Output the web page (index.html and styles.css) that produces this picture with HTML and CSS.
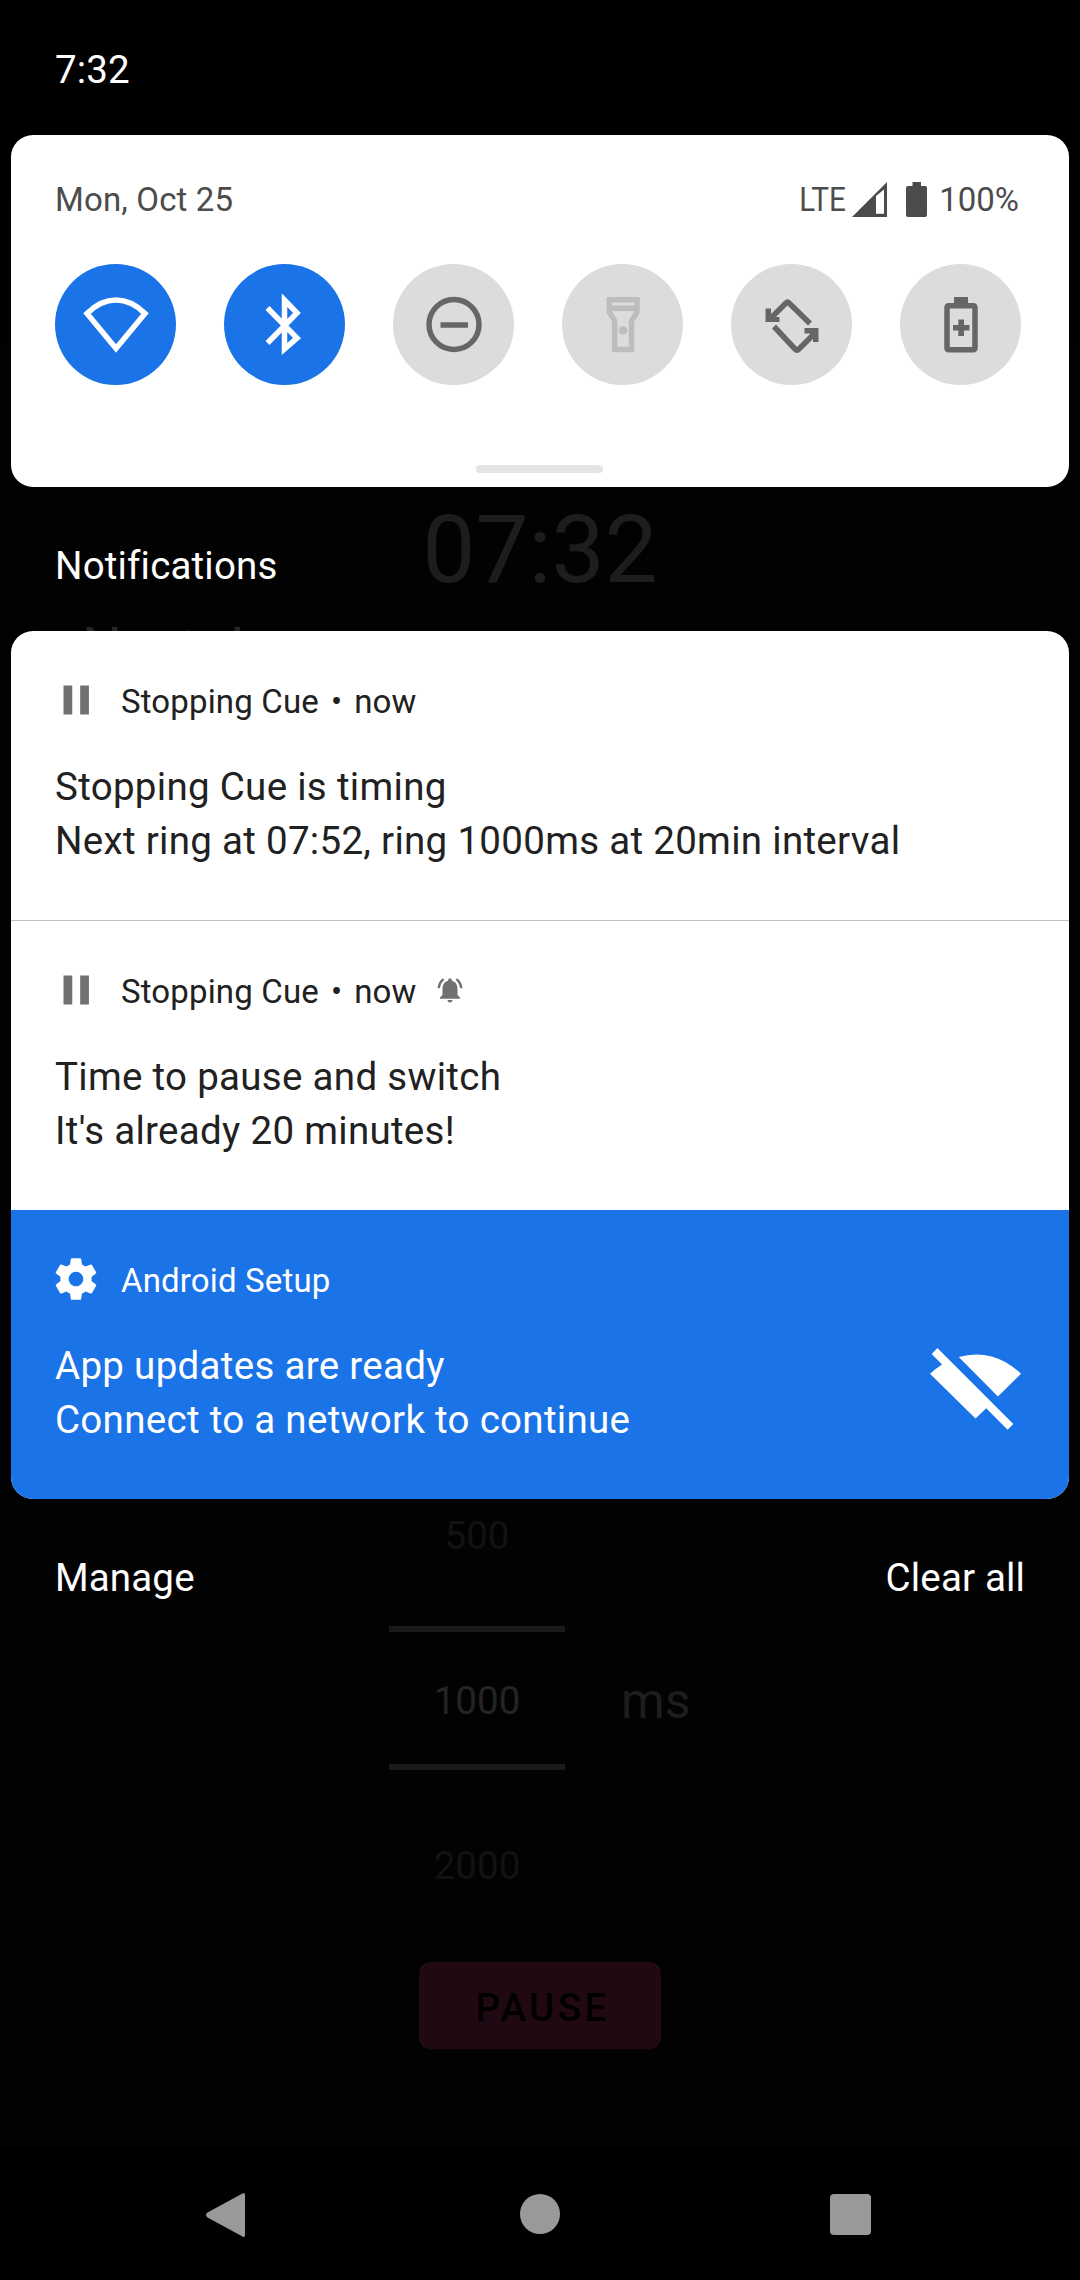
FILE: index.html
```html
<!DOCTYPE html>
<html lang="en">
<head>
<meta charset="utf-8">
<title>Notification shade</title>
<link rel="stylesheet" href="styles.css">
</head>
<body>
<div class="screen">
  <div class="app" aria-hidden="true">
    <div class="app-clock">07:32</div>
    <div class="app-next">Next ring</div>
    <div class="picker-row">
      <div class="picker">
        <span class="picker-near">500</span>
        <span class="picker-value">1000</span>
        <span class="picker-near picker-after">2000</span>
      </div>
      <span class="picker-unit">ms</span>
    </div>
    <div class="app-button">PAUSE</div>
  </div>

  <div class="shade">
    <header class="status-bar">7:32</header>

    <section class="quick">
      <div class="quick-head">
        <span class="date">Mon, Oct 25</span>
        <span class="lte">LTE</span>
        <svg class="signal" viewBox="0 0 35 35"><path fill-rule="evenodd" d="M35 0V35H0ZM24 14V31.800H32V7.500Z"/></svg>
        <svg class="battery" viewBox="0 0 21 35"><path d="M6.500 0H15V4H19Q21 4 21 6V33Q21 35 19 35H2Q0 35 0 33V6Q0 4 2 4H6.500Z"/></svg>
        <span class="percent">100%</span>
      </div>
      <div class="tiles">
        <div class="tile on"><svg viewBox="0 0 121 121"><path class="line" d="M32 49.500Q45.500 36 61 36T90 49.500L61 84.500Z"/></svg></div>
        <div class="tile on"><svg viewBox="0 0 121 121"><path class="line" d="M43.500 44L73 74 60.500 85V36L73 49 43.500 79"/></svg></div>
        <div class="tile"><svg viewBox="0 0 121 121"><circle class="line" cx="61" cy="60.500" r="25"/><path class="line" d="M47.500 61H75"/></svg></div>
        <div class="tile off"><svg viewBox="0 0 121 121"><path class="line" d="M47.300 35.700H75V48L69.500 57V85.500H52.700V57L47.300 48ZM47 44.300H75"/><circle cx="61" cy="66.500" r="4.300"/></svg></div>
        <div class="tile"><svg viewBox="0 0 121 121"><path class="line" d="M39 55L55 39Q56.500 37.500 58 39L79 59.500M43 62.500L64 85Q66 87 68 85L84 69"/><path d="M34.500 44.500H40V50L43 53H48.500V58H34.500ZM73.500 64H87.500V78H82V72.500L78.500 69.500H73.500Z"/></svg></div>
        <div class="tile"><svg viewBox="0 0 121 121"><rect class="line" x="47" y="41.700" width="28" height="44" rx="1.500"/><path d="M54 33H68V41H54ZM58.300 55.500H64V61H69.500V66.500H64V72H58.300V66.500H53V61H58.300Z"/></svg></div>
      </div>
      <div class="handle"></div>
    </section>

    <h1 class="shade-title">Notifications</h1>

    <main class="list">
      <article class="note">
        <div class="note-head">
          <svg class="note-icon" viewBox="0 0 24 24"><path d="M6 5h4.200v14H6zM14 5h4.200v14H14z"/></svg>
          <span>Stopping Cue</span><span class="dot">•</span><span>now</span>
        </div>
        <p>Stopping Cue is timing</p>
        <p>Next ring at 07:52, ring 1000ms at 20min interval</p>
      </article>
      <article class="note">
        <div class="note-head">
          <svg class="note-icon" viewBox="0 0 24 24"><path d="M6 5h4.200v14H6zM14 5h4.200v14H14z"/></svg>
          <span>Stopping Cue</span><span class="dot">•</span><span>now</span>
          <svg class="bell" viewBox="0 0 24 24"><path d="M7.580 4.080L6.150 2.650C3.750 4.480 2.170 7.300 2.030 10.500h2c.150-2.650 1.510-4.970 3.550-6.420zm12.390 6.420h2c-.150-3.200-1.730-6.020-4.120-7.850l-1.420 1.430c2.020 1.450 3.390 3.770 3.540 6.420zM18 11c0-3.070-1.640-5.640-4.500-6.320V4c0-.830-.670-1.500-1.500-1.500s-1.500.670-1.500 1.500v.680C7.630 5.360 6 7.920 6 11v5l-2 2v1h16v-1l-2-2v-5zm-6 11c.140 0 .270-.010.400-.040.650-.140 1.180-.580 1.440-1.180.100-.240.150-.500.150-.780h-4c.010 1.100.900 2 2.010 2z"/></svg>
        </div>
        <p>Time to pause and switch</p>
        <p>It's already 20 minutes!</p>
      </article>
      <article class="note setup">
        <div class="note-head">
          <svg class="note-icon" viewBox="0 0 24 24"><path d="M19.430 12.980c.040-.320.070-.640.070-.980s-.030-.660-.070-.980l2.110-1.650c.190-.150.240-.420.120-.640l-2-3.460c-.120-.220-.390-.300-.610-.220l-2.490 1c-.520-.400-1.080-.730-1.690-.980l-.380-2.650C14.460 2.180 14.250 2 14 2h-4c-.250 0-.460.180-.490.420l-.380 2.650c-.610.250-1.170.590-1.690.980l-2.490-1c-.230-.090-.490 0-.610.220l-2 3.460c-.130.220-.070.490.120.640l2.110 1.650c-.040.320-.070.650-.070.980s.030.660.070.980l-2.110 1.650c-.190.150-.240.420-.120.640l2 3.460c.120.220.390.300.610.220l2.490-1c.520.400 1.080.730 1.690.980l.380 2.650c.030.240.240.420.490.420h4c.250 0 .460-.180.490-.420l.380-2.650c.610-.250 1.170-.590 1.690-.980l2.490 1c.230.090.490 0 .610-.220l2-3.460c.120-.220.070-.490-.120-.640l-2.110-1.650zM12 15.500c-1.930 0-3.500-1.570-3.500-3.500s1.570-3.500 3.500-3.500 3.500 1.570 3.500 3.500-1.570 3.500-3.500 3.500z"/></svg>
          <span>Android Setup</span>
        </div>
        <div class="setup-body">
          <div>
            <p>App updates are ready</p>
            <p>Connect to a network to continue</p>
          </div>
          <svg class="wifi-off" viewBox="211 206 272 245"><path d="M216 224L233 206 460 433 443 450 379 386 347 417 211 283Q228 267 247 255ZM297 233Q345 219 395 231 445 245 483 283L414 351Z"/></svg>
        </div>
      </article>
    </main>

    <div class="actions"><span>Manage</span><span>Clear all</span></div>

    <nav class="nav">
      <svg viewBox="0 0 60 60"><path d="M42.500 8.500Q45 7 45 10V50Q45 53 42.500 51.500L7.500 32.500Q4.500 30 7.500 27.500Z"/></svg>
      <svg viewBox="0 0 60 60"><circle cx="30" cy="29" r="20"/></svg>
      <svg viewBox="0 0 60 60"><rect x="10" y="9" width="41" height="41" rx="4"/></svg>
    </nav>
  </div>
</div>
</body>
</html>
```

FILE: styles.css
```css
* { box-sizing: border-box; margin: 0; padding: 0; }

body {
  background: #000;
  font-family: Roboto, "Noto Sans", sans-serif;
  font-size: 38.5px;
  font-weight: 400;
}

svg { display: block; flex: none; }

.screen {
  position: relative;
  width: 1080px;
  height: 2280px;
  overflow: hidden;
  background: linear-gradient(#000 0, #000 135px, #020202 560px);
}

/* Dimmed app behind the shade */
.app {
  position: absolute;
  inset: 0;
  display: flex;
  flex-direction: column;
  align-items: center;
  padding-top: 495px;
  color: #1d1d1d;
}
.app-clock { font-size: 94.6px; line-height: 110px; }
.app-next { align-self: flex-start; margin: 11px 0 0 82px; font-size: 56px; line-height: 64px; color: #262626; }
.picker-row {
  display: flex;
  align-self: flex-start;
  align-items: center;
  gap: 56px;
  margin: 784px 0 0 389px;
}
.picker { display: flex; flex-direction: column; width: 176px; text-align: center; }
.picker .picker-near { height: 162px; line-height: 144px; color: #121212; }
.picker .picker-after { height: 192px; line-height: 192px; }
.picker .picker-value {
  height: 144px;
  line-height: 138px;
  color: #242424;
  border-top: 6px solid #1a1a1a;
  border-bottom: 6px solid #1a1a1a;
}
.picker-unit { margin-top: -25px; font-size: 50px; }
.app-button {
  width: 242px;
  height: 87px;
  padding-left: 5px;
  border-radius: 11px;
  background: #200912;
  color: #000;
  font-weight: 500;
  line-height: 91px;
  letter-spacing: 3.4px;
  text-align: center;
}

/* Shade */
.shade { position: relative; display: flex; flex-direction: column; height: 100%; }
.status-bar { height: 135px; padding-left: 55px; line-height: 140px; letter-spacing: .15px; color: #fff; }

.quick {
  height: 352px;
  margin: 0 11px;
  padding: 0 44px;
  border-radius: 22px;
  background: #fff;
  color: #4c4c4c;
  fill: #4c4c4c;
}
.quick-head { display: flex; align-items: center; height: 129px; padding-right: 6px; font-size: 33px; line-height: 129px; }
.date { margin-right: auto; letter-spacing: .15px; }
.lte { transform: scaleX(.9); transform-origin: right; }
.signal { width: 35px; height: 35px; margin: 0 19px 0 6px; }
.battery { width: 21px; height: 35px; margin-right: 12px; }
.tiles { display: flex; justify-content: space-between; width: 966px; }
.tile { width: 121px; height: 121px; border-radius: 50%; background: #dcdcdc; color: #666; fill: #666; }
.tile.on { background: #1b73e8; color: #fff; }
.tile.off { color: #bdbdbd; fill: #bdbdbd; }
.line { fill: none; stroke: currentColor; stroke-width: 5.5px; }
.handle { width: 127px; height: 8px; margin: 80px 0 0 421px; border-radius: 4px; background: #e4e4e4; }

.shade-title { height: 144px; padding-left: 55px; color: #fff; font-size: 38.5px; font-weight: 400; line-height: 157px; letter-spacing: .17px; }

.list { height: 868px; margin: 0 11px; overflow: hidden; border-radius: 22px; background: #fff; }
.note { height: 290px; padding: 39px 44px 0; color: #212121; fill: #707173; border-bottom: 1px solid #c0c0c4; }
.note:nth-child(2) { height: 289px; border-bottom: 0; }
.note-head { display: flex; align-items: center; height: 60px; margin-bottom: 30px; font-size: 33px; letter-spacing: .15px; }
.note-head span { padding-top: 3px; }
.note-icon { width: 50px; height: 50px; margin: 0 20px 0 -4px; }
.note-head .dot { margin: 0 12px; }
.bell { width: 30px; height: 30px; margin-left: 19px; }
.note p { line-height: 54px; letter-spacing: .3px; white-space: nowrap; }
.note.setup { height: 289px; border: 0; background: #1b73e8; color: #fff; fill: #fff; }
.setup-body { display: flex; justify-content: space-between; align-items: flex-start; }
.wifi-off { width: 91px; height: 82px; margin: 9px 4px 0 0; }

.actions { display: flex; justify-content: space-between; padding: 0 55px; line-height: 157px; letter-spacing: .15px; color: #fff; }

.nav {
  display: flex;
  justify-content: space-between;
  height: 132px;
  margin-top: auto;
  padding: 37px 200px 0;
  background: #000;
  fill: #999;
}
.nav svg { width: 60px; height: 60px; }
```
